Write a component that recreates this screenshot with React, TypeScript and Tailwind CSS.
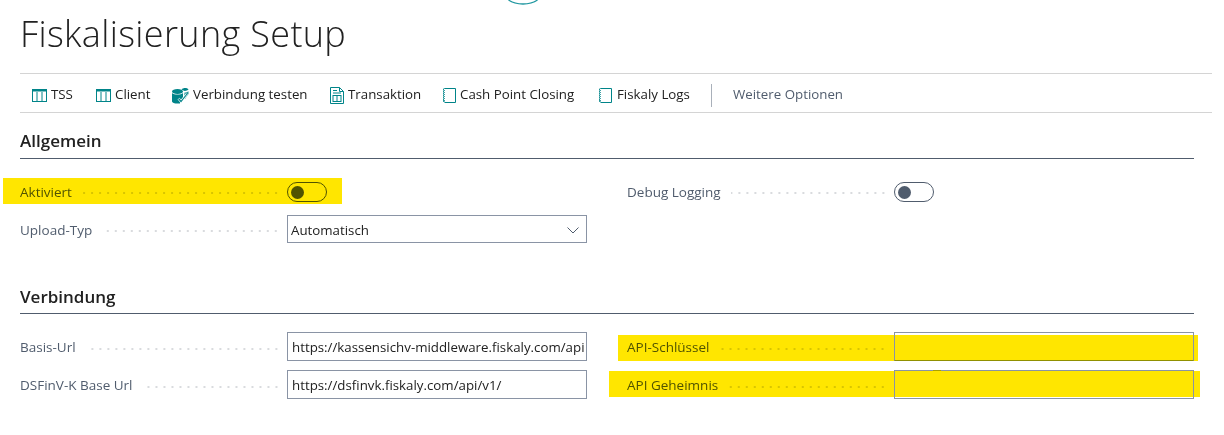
import React from 'react';

const TEAL = '#008489';

function TableIcon() {
  return (
    <svg width="15" height="13" viewBox="0 0 15 13" fill="none" stroke={TEAL} className="shrink-0">
      <rect x="0.5" y="0.5" width="14" height="12" />
      <path d="M0 1.5h15" strokeWidth="2" />
      <path d="M5 3v9M10 3v9" />
    </svg>
  );
}

function DbCheckIcon() {
  return (
    <svg width="17" height="17" viewBox="0 0 17 17" className="shrink-0">
      <ellipse cx="5.5" cy="4.5" rx="5.5" ry="2.5" fill={TEAL} />
      <path d="M0 6c2 2 9 2 11 0v5.5L8 15v1.6H5.5C2.5 16.6 0 15.800 0 14.500z" fill={TEAL} />
      <path d="M9.500 2.500C11 .5 15.500.5 16.500 2.500 15.500 4 12 4.200 11.500 3.500z" fill={TEAL} />
      <path d="M12.500 5.500c1.500 0 3-.4 4-1.200V7l-3.500 5-1-1z" fill={TEAL} opacity="0.85" />
      <path d="M6.500 11.500l2.500 3 6-7.500" fill="none" stroke="#fff" strokeWidth="2.600" />
      <path d="M6.500 11.500l2.500 3 6-7.500" fill="none" stroke={TEAL} strokeWidth="1.200" />
    </svg>
  );
}

function DocIcon() {
  return (
    <svg width="14" height="17" viewBox="0 0 14 17" fill="none" stroke={TEAL} className="shrink-0">
      <path d="M.5.500h9l4 4v12H.5z" />
      <path d="M9.500.500v4h4" />
      <path d="M3 3.500h4M3 6h8" strokeWidth="1" />
      <rect x="3" y="8.500" width="8" height="6" />
      <path d="M7 8.500v6" />
    </svg>
  );
}

function NotebookIcon() {
  return (
    <svg width="14" height="15" viewBox="0 0 14 15" fill="none" stroke={TEAL} className="shrink-0">
      <path d="M2.500.500h11v14h-11" />
      <path
        d="M2.500.500l-1.500 1 1.500 1-1.500 1 1.500 1-1.500 1 1.500 1-1.500 1 1.500 1-1.500 1 1.500 1-1.500 1 1.500 1-1.500.500 1.500.500"
        strokeWidth="1"
      />
    </svg>
  );
}

function ToolItem({ icon, label, className }: { icon: React.ReactNode; label: string; className: string }) {
  return (
    <div className={`flex items-center text-[#212121] ${className}`}>
      {icon}
      <span>{label}</span>
    </div>
  );
}

function Label({ text, className = '' }: { text: string; className?: string }) {
  return (
    <div className={`flex items-center w-[267px] pr-[7px] text-[13.500px] text-[#505c6d] ${className}`}>
      <span className="whitespace-nowrap">{text}</span>
      <span className="flex-1 ml-2.5 mt-0.5 h-0.5 bg-[radial-gradient(circle,#d9dbde_1px,transparent_1px)] bg-[length:8px_2px] bg-right" />
    </div>
  );
}

function Toggle({ className = '' }: { className?: string }) {
  return (
    <div className={`flex items-center w-10 h-5 pl-[3px] rounded-full border border-[#505c6d] ${className}`}>
      <div className="w-[13px] h-[13px] rounded-full bg-[#505c6d]" />
    </div>
  );
}

function TextField({ value, className = '' }: { value?: string; className?: string }) {
  return (
    <div className={`w-[300px] h-[29px] flex items-center px-1 pt-0.5 border border-[#8a94a5] text-[13.300px] text-[#212121] overflow-hidden whitespace-nowrap ${className}`}>
      {value}
    </div>
  );
}

function Section({ title, className, titleClass, children }: { title: string; className: string; titleClass: string; children: React.ReactNode }) {
  return (
    <section className={className}>
      <h2 className={`text-[17px] leading-[23px] font-semibold text-[#212121] border-b border-[#505c6d] mr-[18px] ${titleClass}`}>
        {title}
      </h2>
      {children}
    </section>
  );
}

export default function App() {
  return (
    <div
      className="relative w-[1224px] h-[435px] overflow-hidden bg-white pl-5 pr-3 text-[13.300px]"
      style={{ fontFamily: '"Open Sans", sans-serif' }}
    >
      {/* Rand eines Kreises, oben im Screenshot abgeschnitten */}
      <svg width="32" height="6" viewBox="0 0 32 6" fill="none" className="absolute left-[507px] top-0">
        <path d="M1.500 0C5 2.500 10 4 16 4S27 2.500 30.500 0" stroke="#1f97a0" strokeWidth="1.300" />
      </svg>

      <h1 className="pt-[10px] h-[73px] text-[36px] leading-[48px] font-light text-[#212121] tracking-[0.35px]">
        Fiskalisierung Setup
      </h1>

      <div className="flex items-center h-10 pl-3 pt-1 border-y border-[#d4d4d4]">
        <ToolItem icon={<TableIcon />} label="TSS" className="gap-[4px] w-[64px]" />
        <ToolItem icon={<TableIcon />} label="Client" className="gap-[4px] w-[76px]" />
        <ToolItem icon={<DbCheckIcon />} label="Verbindung testen" className="gap-[4px] w-[158px]" />
        <ToolItem icon={<DocIcon />} label="Transaktion" className="gap-[4px] w-[112px]" />
        <ToolItem icon={<NotebookIcon />} label="Cash Point Closing" className="gap-[4px] w-[156px]" />
        <ToolItem icon={<NotebookIcon />} label="Fiskaly Logs" className="gap-[5px] w-[113px]" />
        <div className="w-px h-[23px] bg-[#a9b0ba]" />
        <span className="ml-[21px] text-[#505c6d]">Weitere Optionen</span>
      </div>

      <Section title="Allgemein" className="pt-4" titleClass="h-[30px]">
        <div className="grid grid-cols-[567px_567px] gap-x-10 gap-y-[13px] pt-[23px]">
          <div className="flex items-center h-5">
            <Label text="Aktiviert" />
            <Toggle />
          </div>
          <div className="flex items-center h-5">
            <Label text="Debug Logging" />
            <Toggle />
          </div>
          <div className="flex items-center h-7">
            <Label text="Upload-Typ" className="pt-0.5" />
            <div className="w-[300px] h-7 flex items-center justify-between pl-[3px] pr-[7px] pt-[3px] border border-[#8a94a5] text-[#212121]">
              Automatisch
              <svg width="12" height="7" viewBox="0 0 12 7" fill="none" stroke="#505c6d">
                <path d="M.5.500l5.500 5.500 5.500-5.500" />
              </svg>
            </div>
          </div>
        </div>
      </Section>

      <Section title="Verbindung" className="pt-[42px]" titleClass="h-[29px]">
        <div className="grid grid-cols-[567px_567px] gap-x-10 gap-y-[9px] pt-[18px]">
          <div className="flex items-center">
            <Label text="Basis-Url" className="pt-0.5" />
            <TextField value="https://kassensichv-middleware.fiskaly.com/api" />
          </div>
          <div className="flex items-center">
            <Label text="API-Schlüssel" className="pt-0.5" />
            <TextField className="relative z-10 border-b-[#909000]" />
          </div>
          <div className="flex items-center">
            <Label text="DSFinV-K Base Url" className="pt-0.5" />
            <TextField value="https://dsfinvk.fiskaly.com/api/v1/" />
          </div>
          <div className="flex items-center">
            <Label text="API Geheimnis" className="pt-0.5" />
            <TextField className="relative z-10" />
          </div>
        </div>
      </Section>

      {/* Gelbe Markierungen, von Hand über den Screenshot gelegt */}
      <div className="absolute left-[3px] top-[178px] w-[339px] h-[26px] bg-[#ffe600] mix-blend-multiply" />
      <div className="absolute left-[618px] top-[335px] w-[580px] h-[26px] bg-[#ffe600] mix-blend-multiply" />
      <div className="absolute left-[609px] top-[371px] w-[591px] h-[26px] bg-[#ffe600] mix-blend-multiply" />
      <div className="absolute left-[933px] top-[370px] w-2 h-px z-20 bg-[#a8a000]" />
    </div>
  );
}
